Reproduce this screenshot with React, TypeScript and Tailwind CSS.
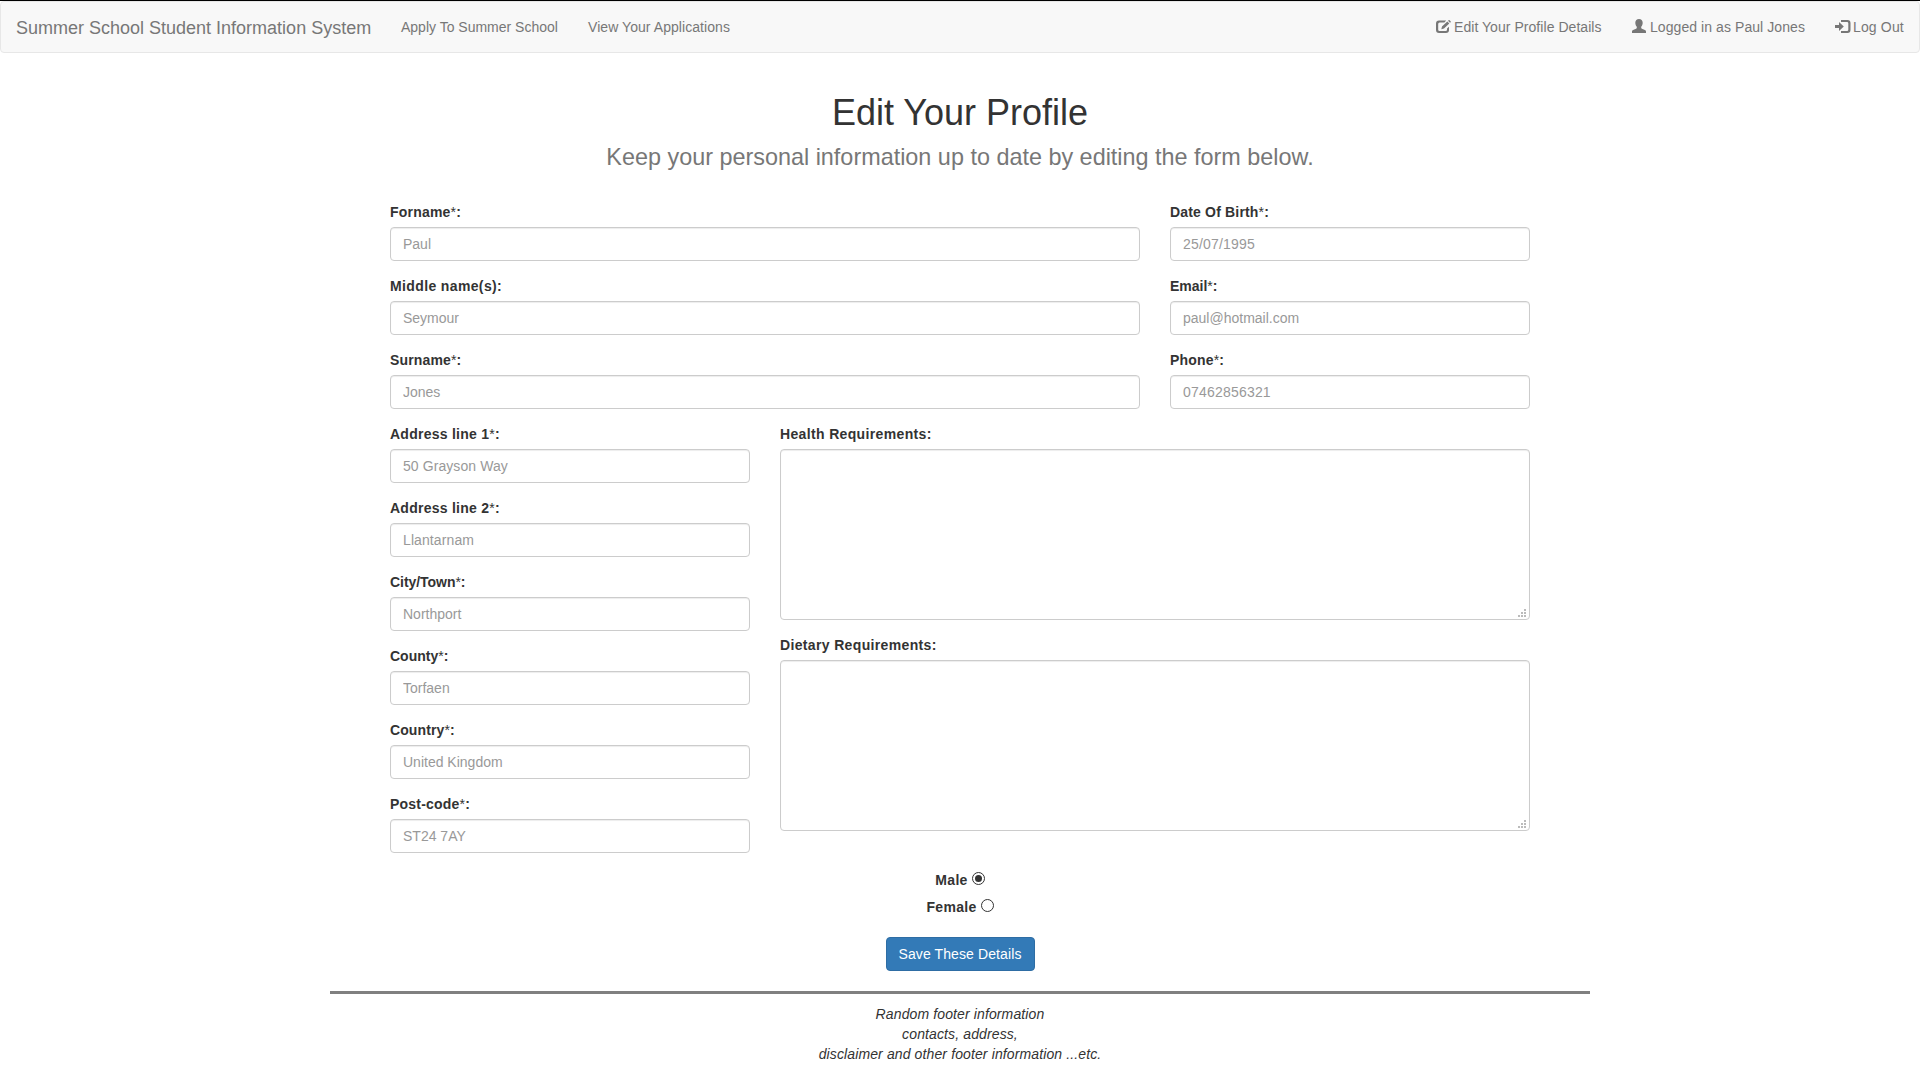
import React from "react";

type FieldProps = { label: string; placeholder: string; labelClass?: string; inputClass?: string };

const controlClass =
  "block w-full rounded-[4px] border border-[#cccccc] bg-white px-3 py-1.5 text-[14px] leading-[20px] text-[#555555] shadow-[inset_0_1px_1px_rgba(0,0,0,0.075)] placeholder:text-[#999999] placeholder:opacity-100 outline-none";

function Field({ label, placeholder, labelClass = "", inputClass = "" }: FieldProps) {
  const required = label.endsWith("*:");
  return (
    <label className="mb-[15px] block">
      <span className={`mb-[5px] block h-5 font-bold ${labelClass}`}>
        {required ? label.slice(0, -2) : label}
        {required && <><span className="font-normal">*</span>:</>}
      </span>
      <input type="text" placeholder={placeholder} className={`${controlClass} h-[34px] ${inputClass}`} />
    </label>
  );
}

function Area({ label }: { label: string }) {
  return (
    <label className="mb-[15px] block">
      <span className="mb-[5px] block h-5 font-bold tracking-[0.35px]">{label}</span>
      <span className="relative block h-[171px]">
        <textarea className={`${controlClass} h-[171px] resize-none`} />
        <svg className="absolute right-[4px] bottom-[3px]" width="8" height="8" fill="#bbbbbb" shapeRendering="crispEdges">
          <path d="M6 0h2v2h-2zM3 3h2v2h-2zM6 3h2v2h-2zM0 6h2v2h-2zM3 6h2v2h-2zM6 6h2v2h-2z" />
        </svg>
      </span>
    </label>
  );
}

function EditIcon() {
  return (
    <svg className="mt-[3px]" width="15" height="14" viewBox="0 0 15 14" fill="currentColor">
      <path d="M10.2 .5H3Q0 .5 0 3.500v6.500q0 3 3 3h7q3 0 3-3V6.700L11 8.500v1.200q0 1.300-1.300 1.300H3.600Q2.200 11 2.200 9.700V4Q2.200 2.500 3.600 2.500h4.800z" />
      <path d="M11.300 1.500l2 2L8 8.500 5.300 9.300 6 6.500zM12 .8l.6-.6q.5-.4 1 0l1 1q.4.500 0 1l-.6.6z" />
    </svg>
  );
}

function UserIcon() {
  return (
    <svg className="mt-[2px]" width="14" height="14" viewBox="0 0 14 14" fill="currentColor">
      <path d="M7 0C9.200 0 10.700 1.500 10.700 3.800c0 1.500-.6 3-1.500 4v1c0 .5.2.8.7 1l3 1.300c.8.400 1.100.8 1.100 1.600V14H0v-1.300c0-.8.3-1.200 1.100-1.600l3-1.300c.5-.2.7-.5.7-1v-1c-.9-1-1.500-2.500-1.500-4C3.300 1.500 4.800 0 7 0z" />
    </svg>
  );
}

function LogOutIcon() {
  return (
    <svg className="mt-[3px]" width="16" height="14" viewBox="0 0 16 14" fill="currentColor">
      <path d="M0 5h4V2.100L8.800 6.500 4 10.900V8H0z" />
      <path d="M6 0h6.500q3 0 3 3v7q0 3-3 3H6v-2h6q1.300 0 1.300-1.300V3.300Q13.300 2 12 2H6z" />
    </svg>
  );
}

function Radio({ checked = false }: { checked?: boolean }) {
  return (
    <svg className="mt-[2px]" width="13" height="13" viewBox="0 0 13 13">
      <circle cx="6.500" cy="6.500" r="6" fill="#ffffff" stroke="#333333" />
      {checked && <circle cx="6.500" cy="6.500" r="3.500" fill="#333333" />}
    </svg>
  );
}

export default function App() {
  return (
    <div className="flex h-[1080px] flex-col overflow-hidden border-t border-black bg-white font-['Liberation_Sans',Arial,sans-serif] text-[14px] leading-[20px] text-[#333333]">
      <nav className="flex h-[52px] shrink-0 items-center rounded-[4px] border border-[#e7e7e7] bg-[#f8f8f8] px-[15px] text-[#777777]">
        <a className="mt-[2px] mr-[30px] w-[355px] whitespace-nowrap text-[18px]">Summer School Student Information System</a>
        <a className="mr-[30px] w-[157px] whitespace-nowrap">Apply To Summer School</a>
        <a className="whitespace-nowrap tracking-[0.06px]">View Your Applications</a>
        <div className="ml-auto flex">
          <a className="mr-[30px] flex w-[166px] gap-[3px] whitespace-nowrap tracking-[0.05px]"><EditIcon />Edit Your Profile Details</a>
          <a className="mr-[30px] flex w-[173px] gap-[4px] whitespace-nowrap tracking-[0.07px]"><UserIcon />Logged in as Paul Jones</a>
          <a className="flex w-[69px] gap-[2px] whitespace-nowrap tracking-[0.15px]"><LogOutIcon />Log Out</a>
        </div>
      </nav>

      <main className="mx-auto flex w-[1140px] flex-col pt-[40px]">
        <header className="flex h-[109px] flex-col items-center gap-[11px]">
          <h1 className="text-[36px] leading-[40px]">Edit Your Profile</h1>
          <h2 className="text-[23.4px] leading-[26px] text-[#777777]">Keep your personal information up to date by editing the form below.</h2>
        </header>

        <form className="flex flex-col">
          <div className="grid grid-cols-[750px_360px] gap-x-[30px]">
            <Field label="Forname*:" placeholder="Paul" labelClass="tracking-[0.2px]" />
            <Field label="Date Of Birth*:" placeholder="25/07/1995" labelClass="tracking-[0.17px]" inputClass="tracking-[0.2px]" />
            <Field label="Middle name(s):" placeholder="Seymour" labelClass="tracking-[0.37px]" />
            <Field label="Email*:" placeholder="paul@hotmail.com" />
            <Field label="Surname*:" placeholder="Jones" labelClass="tracking-[0.15px]" />
            <Field label="Phone*:" placeholder="07462856321" labelClass="tracking-[0.17px]" inputClass="tracking-[0.2px]" />
          </div>
          <div className="grid grid-cols-[360px_750px] gap-x-[30px]">
            <div>
              <Field label="Address line 1*:" placeholder="50 Grayson Way" labelClass="tracking-[0.25px]" inputClass="tracking-[0.08px]" />
              <Field label="Address line 2*:" placeholder="Llantarnam" labelClass="tracking-[0.25px]" inputClass="tracking-[0.1px]" />
              <Field label="City/Town*:" placeholder="Northport" labelClass="tracking-[-0.05px]" />
              <Field label="County*:" placeholder="Torfaen" />
              <Field label="Country*:" placeholder="United Kingdom" labelClass="tracking-[0.1px]" />
              <Field label="Post-code*:" placeholder="ST24 7AY" labelClass="tracking-[0.2px]" />
            </div>
            <div>
              <Area label="Health Requirements:" />
              <Area label="Dietary Requirements:" />
            </div>
          </div>
          <div className="flex flex-col items-center pt-[2px] font-bold tracking-[0.3px]">
            <label className="mb-[7px] flex h-5 gap-[4px]">Male<Radio checked /></label>
            <label className="flex h-5 gap-[4px]">Female<Radio /></label>
          </div>
          <button type="button" className="mx-auto mt-[20px] h-[34px] w-[149px] rounded-[4px] border border-[#2e6da4] bg-[#337ab7] tracking-[0.11px] whitespace-nowrap text-white">
            Save These Details
          </button>
        </form>
      </main>

      <footer className="mx-auto mt-[20px] w-[1260px] border-t-[3px] border-[#808080] pt-[10px] text-center tracking-[0.12px] italic">
        <p>Random footer information</p>
        <p>contacts, address,</p>
        <p>disclaimer and other footer information ...etc.</p>
      </footer>
    </div>
  );
}
